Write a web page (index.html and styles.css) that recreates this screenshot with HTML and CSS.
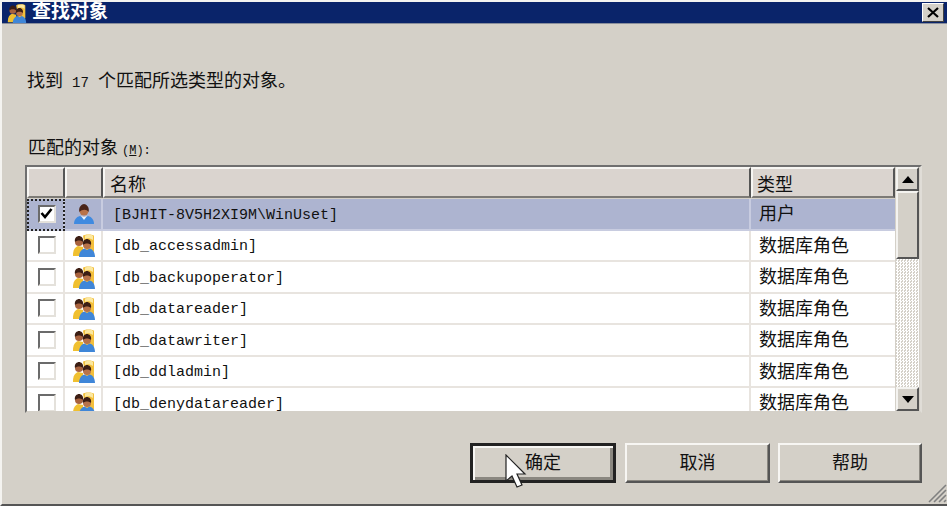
FILE: index.html
```html
<!DOCTYPE html>
<html lang="zh-CN">
<head>
  <meta charset="UTF-8" />
  <title>查找对象</title>
  <link rel="stylesheet" href="styles.css">
</head>
<body>
  <svg class="defs" width="0" height="0">
    <defs>
      <symbol id="person" viewBox="0 0 20 20">
        <path d="M0 20c0-4 2-7 6-8l4 2 4-2c4 1 6 4 6 8z" fill="#3f8ae0"/>
        <path d="M7 12l3 4 3-4-3 1z" fill="#e8f2fb"/>
        <circle cx="10" cy="7" r="4.500" fill="#b8734a"/>
        <path d="M5.500 8C4 3 8 0 10 0s6 3 4.500 8C13 5 8 5 5.500 8z" fill="#4a2418"/>
      </symbol>
      <symbol id="group" viewBox="0 0 24 24">
        <path d="M11 3c0-2 11-2 11 0v15c0 2-5 2-8 1z" fill="#f3bf3c"/>
        <path d="M13 2.500c3-1 7-1 8 .5v4c-3-2-6-2-8-1z" fill="#fbe8a0"/>
        <path d="M1 22c0-5 2-8 5-9l5 1v9H1z" fill="#f0c030"/>
        <circle cx="7" cy="9" r="4" fill="#a8623e"/>
        <path d="M3 9c-1-4 2-6 4-6s5 2 4 6c-2-2-6-2-8 0z" fill="#3c1e14"/>
        <path d="M7 24c0-5 3-8 5.500-8.500l2.500 1.500 2.500-1.500c3 .5 5.500 3.500 5.500 8.500z" fill="#3f86d8"/>
        <circle cx="15" cy="12" r="4" fill="#b8734a"/>
        <path d="M11 12c-1-4 2-6 4-6s5 2 4 6c-2-2-6-2-8 0z" fill="#3c1e14"/>
      </symbol>
    </defs>
  </svg>

  <div class="dialog">
    <div class="titlebar">
      <svg class="title-icon"><use href="#group"/></svg>
      <span class="title-text">查找对象</span>
      <button class="close-btn">
        <svg width="12" height="11" viewBox="0 0 12 11"><path d="M1 1l10 9M11 1L1 10" stroke="#000" stroke-width="2.200" fill="none"/></svg>
      </button>
    </div>

    <div class="content">
      <p class="found">找到 <span class="latin">17</span> 个匹配所选类型的对象。</p>
      <p class="label">匹配的对象<span class="hotkey">(<u>M</u>):</span></p>

      <div class="listview">
        <div class="list-main">
          <div class="list-head">
            <div class="hcell col-check"></div>
            <div class="hcell col-icon"></div>
            <div class="hcell col-name">名称</div>
            <div class="hcell col-type">类型</div>
          </div>
          <div class="row selected">
            <div class="cell col-check focus"><span class="check on"><svg width="13" height="11" viewBox="0 0 13 11"><path d="M1.500 5l3.500 4 6.500-8" stroke="#000" stroke-width="2.600" fill="none"/></svg></span></div>
            <div class="cell col-icon"><svg class="row-icon small"><use href="#person"/></svg></div>
            <div class="cell col-name">[BJHIT-8V5H2XI9M\WinUset]</div>
            <div class="cell col-type">用户</div>
          </div>
          <div class="row">
            <div class="cell col-check"><span class="check"></span></div>
            <div class="cell col-icon"><svg class="row-icon"><use href="#group"/></svg></div>
            <div class="cell col-name">[db_accessadmin]</div>
            <div class="cell col-type">数据库角色</div>
          </div>
          <div class="row">
            <div class="cell col-check"><span class="check"></span></div>
            <div class="cell col-icon"><svg class="row-icon"><use href="#group"/></svg></div>
            <div class="cell col-name">[db_backupoperator]</div>
            <div class="cell col-type">数据库角色</div>
          </div>
          <div class="row">
            <div class="cell col-check"><span class="check"></span></div>
            <div class="cell col-icon"><svg class="row-icon"><use href="#group"/></svg></div>
            <div class="cell col-name">[db_datareader]</div>
            <div class="cell col-type">数据库角色</div>
          </div>
          <div class="row">
            <div class="cell col-check"><span class="check"></span></div>
            <div class="cell col-icon"><svg class="row-icon"><use href="#group"/></svg></div>
            <div class="cell col-name">[db_datawriter]</div>
            <div class="cell col-type">数据库角色</div>
          </div>
          <div class="row">
            <div class="cell col-check"><span class="check"></span></div>
            <div class="cell col-icon"><svg class="row-icon"><use href="#group"/></svg></div>
            <div class="cell col-name">[db_ddladmin]</div>
            <div class="cell col-type">数据库角色</div>
          </div>
          <div class="row">
            <div class="cell col-check"><span class="check"></span></div>
            <div class="cell col-icon"><svg class="row-icon"><use href="#group"/></svg></div>
            <div class="cell col-name">[db_denydatareader]</div>
            <div class="cell col-type">数据库角色</div>
          </div>
        </div>
        <div class="scrollbar">
          <div class="sb-btn"><svg width="12" height="7" viewBox="0 0 12 7"><path d="M6 0l6 7H0z" fill="#000"/></svg></div>
          <div class="sb-thumb"></div>
          <div class="sb-track"></div>
          <div class="sb-btn"><svg width="12" height="7" viewBox="0 0 12 7"><path d="M0 0h12L6 7z" fill="#000"/></svg></div>
        </div>
      </div>

      <div class="buttons">
        <button class="btn default">确定</button>
        <button class="btn">取消</button>
        <button class="btn">帮助</button>
      </div>
    </div>

    <!-- mouse pointer in the screenshot -->
    <svg class="cursor" width="24" height="34" viewBox="0 0 24 34">
      <path d="M1 1v26l6-5 5 11 5-2-5-11h8z" fill="#fff" stroke="#222" stroke-width="1.200"/>
    </svg>
    <svg class="grip" width="20" height="20" viewBox="0 0 20 20">
      <path d="M2 19L19 2M7 19L19 7M12 19l7-7M17 19l2-2" stroke="#808080" stroke-width="1.600" fill="none"/>
    </svg>
  </div>
</body>
</html>
```

FILE: styles.css
```css
* { margin: 0; padding: 0; box-sizing: border-box; }
html, body { height: 100%; overflow: hidden; background: #d4d0c8; }
body {
  font-family: "Liberation Mono", "Noto Sans CJK SC", monospace;
  font-size: 15px;
  color: #111;
}
.defs { position: absolute; }

.dialog {
  position: relative;
  height: 506px;
  border-top: 2px solid #f4f3f0;
  border-left: 2px solid #f4f3f0;
  border-bottom: 2px solid #555;
  background: #d4d0c8;
}

/* title bar */
.titlebar {
  display: flex;
  align-items: center;
  height: 22px;
  padding: 0 3px;
  background: #0a246a;
  border-bottom: 1px solid #8a8f9c;
}
.title-icon { width: 24px; height: 20px; flex: none; }
.title-text {
  margin-left: 3px;
  font-family: "Noto Sans CJK SC", sans-serif;
  font-size: 19px;
  font-weight: 700;
  line-height: 20px;
  color: #fff;
  transform: translateY(-3px);
}
.close-btn {
  margin-left: auto;
  width: 22px;
  height: 19px;
  display: flex;
  align-items: center;
  justify-content: center;
  background: #d4d0c8;
  border: 1px solid;
  border-color: #fff #404040 #404040 #fff;
}

/* content */
.content { padding: 0 23px 0 25px; }
.found, .label {
  height: 24px;
  line-height: 24px;
  font-family: "Noto Sans CJK SC", sans-serif;
  font-size: 18px;
}
.found { margin-top: 43px; }
.label { margin-top: 43px; margin-left: 1px; }
.latin, .hotkey { font-family: "Liberation Mono", monospace; }
.latin { font-size: 14px; margin: 0 5px; }
.hotkey { font-size: 12px; margin-left: 4px; }

/* list */
.listview {
  display: flex;
  margin: 7px 0 0 -2px;
  width: 897px;
  height: 248px;
  border: 2px solid;
  border-color: #6f6f6f #e0ddd7 #d4d0c8 #6f6f6f;
  background: #fff;
  overflow: hidden;
}
.list-main { flex: 1; min-width: 0; overflow: hidden; }
.list-head, .row { display: flex; }
.list-head { height: 32px; background: #d4d0c8; }
.hcell {
  height: 31px;
  line-height: 28px;
  font-family: "Noto Sans CJK SC", sans-serif;
  font-size: 18px;
  background: #dad4cf;
  border: 2px solid;
  border-color: #f7f6f3 #555 #7c7a76 #f7f6f3;
}
.col-check { width: 38px; flex: none; }
.col-icon { width: 38px; flex: none; }
.col-name { width: 648px; flex: none; }
.col-type { width: 144px; flex: none; }
.hcell.col-name { padding-left: 5px; }
.hcell.col-type { padding-left: 4px; }

.row { height: 31.500px; }
.cell {
  display: flex;
  align-items: center;
  border-right: 2px solid #e8e4df;
  border-bottom: 2px solid #e8e4df;
}
.cell.col-check, .cell.col-icon { justify-content: center; }
.cell.col-check { padding-left: 3px; }
.cell.col-icon { padding-left: 2px; }
.cell.col-name { padding: 3px 0 0 10px; }
.cell.col-type {
  padding: 0 0 3px 8px;
  border-right: none;
  font-family: "Noto Sans CJK SC", sans-serif;
  font-size: 18px;
}
.row.selected .cell { background: #adb4d0; border-color: #c8cce0; }
.cell.focus { outline: 2px dotted #222; outline-offset: -2px; }
.row-icon { width: 24px; height: 26px; }
.row-icon.small { width: 20px; height: 20px; }

.check {
  display: flex;
  align-items: center;
  justify-content: center;
  width: 18px;
  height: 18px;
  background: #fff;
  border: 2px solid;
  border-color: #6b6b6b #e4e1db #e4e1db #6b6b6b;
}

/* scrollbar */
.scrollbar {
  width: 25px;
  flex: none;
  display: flex;
  flex-direction: column;
  padding: 0 1px;
  background: #d4d0c8;
}
.sb-btn {
  height: 24px;
  flex: none;
  display: flex;
  align-items: center;
  justify-content: center;
  background: #d4d0c8;
  border: 2px solid;
  border-color: #f4f3f0 #555 #555 #f4f3f0;
}
.sb-thumb {
  height: 68px;
  flex: none;
  background: #d4d0c8;
  border: 2px solid;
  border-color: #f4f3f0 #555 #555 #f4f3f0;
}
.sb-track {
  flex: 1;
  background: repeating-conic-gradient(#fff 0 25%, #d4d0c8 0 50%) 0 0 / 3px 3px;
}

/* buttons */
.buttons {
  display: flex;
  justify-content: flex-end;
  gap: 8px;
  margin: 30px 0 0 -2px;
  width: 897px;
}
.btn {
  width: 145px;
  height: 40px;
  padding-bottom: 4px;
  font-family: "Noto Sans CJK SC", sans-serif;
  font-size: 18px;
  color: #111;
  background: #d4d0c8;
  border: 2px solid;
  border-color: #f7f6f3 #555 #555 #f7f6f3;
  box-shadow: inset -1px -1px 0 #8a8780;
}
.btn:last-child { width: 144px; }
.btn.default {
  width: 146px;
  margin-right: 1px;
  border: 3px solid #222;
  box-shadow: inset 2px 2px 0 #f7f6f3, inset -3px -3px 0 #8a8780;
}

/* things lying over the dialog */
.cursor { position: absolute; left: 503px; top: 452px; }
.grip { position: absolute; right: 0; bottom: 1px; }
```
